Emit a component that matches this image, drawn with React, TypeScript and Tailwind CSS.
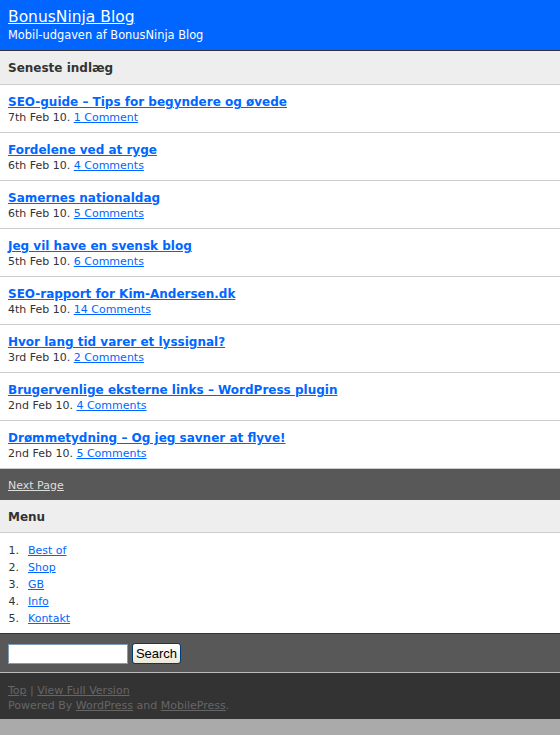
import React from 'react';

const posts = [
  { title: 'SEO-guide – Tips for begyndere og øvede', date: '7th Feb 10.', comments: '1 Comment' },
  { title: 'Fordelene ved at ryge', date: '6th Feb 10.', comments: '4 Comments' },
  { title: 'Samernes nationaldag', date: '6th Feb 10.', comments: '5 Comments' },
  { title: 'Jeg vil have en svensk blog', date: '5th Feb 10.', comments: '6 Comments' },
  { title: 'SEO-rapport for Kim-Andersen.dk', date: '4th Feb 10.', comments: '14 Comments' },
  { title: 'Hvor lang tid varer et lyssignal?', date: '3rd Feb 10.', comments: '2 Comments' },
  { title: 'Brugervenlige eksterne links – WordPress plugin', date: '2nd Feb 10.', comments: '4 Comments' },
  { title: 'Drømmetydning – Og jeg savner at flyve!', date: '2nd Feb 10.', comments: '5 Comments' },
];

const menu = ['Best of', 'Shop', 'GB', 'Info', 'Kontakt'];

const App: React.FC = () => {
  return (
    <div className="min-h-[735px] bg-[#aaaaaa] font-['DejaVu_Sans',Verdana,sans-serif] text-[11px] text-[#333]">
      {/* header */}
      <header className="h-[51px] bg-[#0066ff] border-b border-[#333] px-2 pt-[8px] text-white">
        <a href="#" className="block text-[15.5px] leading-[19px] underline">BonusNinja Blog</a>
        <p className="text-[11.4px] leading-[16px]">Mobil-udgaven af BonusNinja Blog</p>
      </header>

      <h2 className="h-[34px] bg-[#eeeeee] border-b border-[#cccccc] px-2 pt-[1px] flex items-center font-bold text-[12px]">
        Seneste indlæg
      </h2>

      <div className="bg-white">
        {posts.map((p) => (
          <div key={p.title} className="h-[48px] border-b border-[#cccccc] px-2 pt-[9px]">
            <a href="#" className="block font-bold text-[12px] leading-[16px] text-[#0066ff] underline">
              {p.title}
            </a>
            <div className="leading-[15px]">
              {p.date} <a href="#" className="text-[#0066ff] underline">{p.comments}</a>
            </div>
          </div>
        ))}
      </div>

      <div className="h-[31px] bg-[#585858] px-2 pt-[3px] flex items-center">
        <a href="#" className="text-[#dddddd] underline">Next Page</a>
      </div>

      <h2 className="h-[33px] bg-[#eeeeee] border-b border-[#cccccc] px-2 pt-[2px] flex items-center font-bold text-[12px]">
        Menu
      </h2>

      <div className="bg-white pt-[9px] pb-[6px]">
        {menu.map((m, i) => (
          <div key={m} className="flex leading-[17px]">
            <span className="w-[19px] text-right">{i + 1}.</span>
            <a href="#" className="ml-[9px] text-[#0066ff] underline">{m}</a>
          </div>
        ))}
      </div>

      <div className="h-[40px] bg-[#585858] border-t border-[#333] border-b border-b-[#bbbbbb] px-2 pt-[1px] flex items-center gap-[4px]">
        <input
          type="text"
          className="w-[120px] h-[20px] bg-white border border-[#7f9db9] outline-none"
        />
        <button className="h-[21px] w-[49px] rounded-[3px] border border-[#003c74] bg-gradient-to-b from-white to-[#ece9d8] font-['Liberation_Sans',Arial,sans-serif] text-[13px] leading-[17px] text-black">
          Search
        </button>
      </div>

      <footer className="h-[46px] bg-[#333333] px-2 pt-[9px] text-[#666666] leading-[15px]">
        <div className="pt-[1px]">
          <a href="#" className="underline">Top</a> | <a href="#" className="underline">View Full Version</a>
        </div>
        <div>
          Powered By <a href="#" className="underline">WordPress</a> and <a href="#" className="underline">MobilePress</a>.
        </div>
      </footer>
    </div>
  );
};

export default App;
